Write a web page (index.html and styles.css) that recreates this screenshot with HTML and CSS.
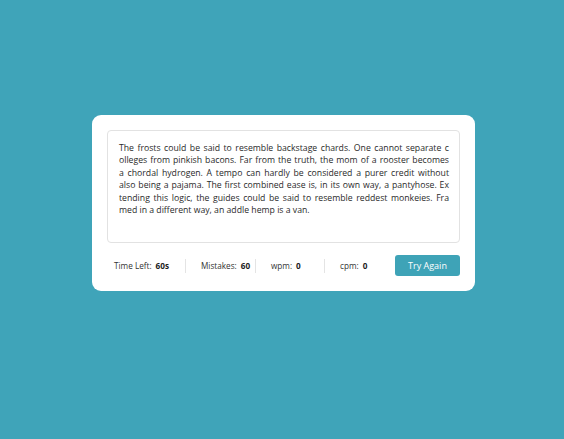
FILE: index.html
```html
<!DOCTYPE html>
<html lang="en">
<head>
<meta charset="utf-8">
<title>Typing Speed Test</title>
<link rel="stylesheet" href="styles.css">
</head>
<body>
<div class="wrapper">
  <div class="typing-box">
    <p class="typing-text"><span class="line">The frosts could be said to resemble backstage chards. One cannot separate c</span><span class="line">olleges from pinkish bacons. Far from the truth, the mom of a rooster becomes</span><span class="line">a chordal hydrogen. A tempo can hardly be considered a purer credit without</span><span class="line">also being a pajama. The first combined ease is, in its own way, a pantyhose. Ex</span><span class="line">tending this logic, the guides could be said to resemble reddest monkeies. Fra</span><span class="line last">med in a different way, an addle hemp is a van.</span></p>
  </div>
  <div class="content">
    <ul class="result-details">
      <li class="time"><span class="label">Time Left:</span><b>60s</b></li>
      <li class="mistake"><span class="label">Mistakes:</span><b>60</b></li>
      <li class="wpm"><span class="label">wpm:</span><b>0</b></li>
      <li class="cpm"><span class="label">cpm:</span><b>0</b></li>
    </ul>
    <button class="btn">Try Again</button>
  </div>
</div>
</body>
</html>
```
FILE: styles.css
```css
* { box-sizing: border-box; margin: 0; padding: 0; }
body {
  background: #3fa4b9;
  font-family: "Open Sans", "Noto Sans", sans-serif;
  color: #2b2b2b;
  padding: 115px 0 0 92px;
}
.wrapper {
  width: 383px;
  height: 176px;
  background: #fff;
  border-radius: 9px;
  padding: 15px;
}
.typing-box {
  height: 113px;
  border: 1px solid #e2e2e2;
  border-radius: 4px;
  padding: 11px 10px 0 11px;
}
.typing-text {
  font-size: 8.7px;
  line-height: 12.4px;
  color: #2a2a2a;
}
.typing-text .line {
  display: block;
  white-space: nowrap;
  text-align: justify;
  text-align-last: justify;
}
.typing-text .line.last { text-align-last: left; }
.content {
  margin-top: 12px;
  height: 21px;
  display: flex;
  align-items: center;
  justify-content: space-between;
}
.result-details {
  list-style: none;
  display: flex;
  align-items: center;
  padding-left: 7px;
}
.result-details li {
  display: flex;
  align-items: center;
  height: 14px;
  font-size: 8.2px;
  color: #333;
}
.result-details li b { margin-left: 4px; font-weight: 700; color: #222; }
.result-details li.time { width: 71px; }
.result-details li.mistake { width: 70px; }
.result-details li.wpm { width: 69px; }
.result-details li + li { border-left: 1px solid #e4e4e4; padding-left: 15px; }
.btn {
  width: 65px;
  height: 21px;
  border: none;
  border-radius: 3px;
  background: #3ea3b7;
  color: #fff;
  font-family: inherit;
  font-size: 9px;
}
```
